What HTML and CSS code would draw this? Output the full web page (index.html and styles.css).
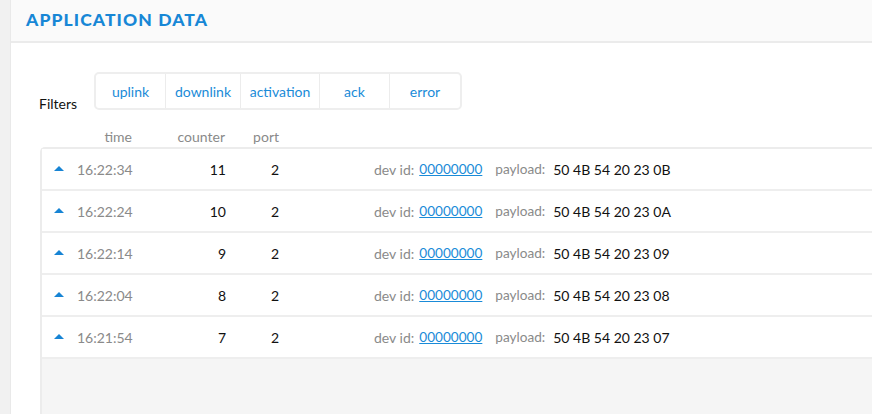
FILE: index.html
```html
<!DOCTYPE html>
<html>
<head>
<meta charset="utf-8">
<link rel="stylesheet" href="styles.css">
</head>
<body>
<div class="panel">
  <div class="header"><h1 class="title">APPLICATION DATA</h1></div>
  <div class="content">
    <div class="filters">
      <span class="filters-label">Filters</span>
      <div class="btn-group">
        <span class="btn b-uplink">uplink</span>
        <span class="btn b-downlink">downlink</span>
        <span class="btn b-activation">activation</span>
        <span class="btn b-ack">ack</span>
        <span class="btn b-error">error</span>
      </div>
    </div>
    <div class="colheads">
      <span class="c-time">time</span>
      <span class="c-counter">counter</span>
      <span class="c-port">port</span>
    </div>
    <div class="table">
      <div class="row"><span class="arrow"></span><span class="c-time">16:22:34</span><span class="c-counter">11</span><span class="c-port">2</span><span class="lbl dev">dev id:</span><a class="link">00000000</a><span class="lbl pay">payload:</span><span class="val">50 4B 54 20 23 0B</span></div>
      <div class="row"><span class="arrow"></span><span class="c-time">16:22:24</span><span class="c-counter">10</span><span class="c-port">2</span><span class="lbl dev">dev id:</span><a class="link">00000000</a><span class="lbl pay">payload:</span><span class="val">50 4B 54 20 23 0A</span></div>
      <div class="row"><span class="arrow"></span><span class="c-time">16:22:14</span><span class="c-counter">9</span><span class="c-port">2</span><span class="lbl dev">dev id:</span><a class="link">00000000</a><span class="lbl pay">payload:</span><span class="val">50 4B 54 20 23 09</span></div>
      <div class="row"><span class="arrow"></span><span class="c-time">16:22:04</span><span class="c-counter">8</span><span class="c-port">2</span><span class="lbl dev">dev id:</span><a class="link">00000000</a><span class="lbl pay">payload:</span><span class="val">50 4B 54 20 23 08</span></div>
      <div class="row"><span class="arrow"></span><span class="c-time">16:21:54</span><span class="c-counter">7</span><span class="c-port">2</span><span class="lbl dev">dev id:</span><a class="link">00000000</a><span class="lbl pay">payload:</span><span class="val">50 4B 54 20 23 07</span></div>
    </div>
  </div>
</div>
</body>
</html>
```
FILE: styles.css
```css
html, body {
  margin: 0;
  padding: 0;
  height: 100%;
  overflow: hidden;
}
body {
  background: #f1f1f1;
  font-family: Lato, "Open Sans", sans-serif;
  font-size: 14px;
  color: #111;
}
.panel {
  margin-left: 10px;
  border-left: 1px solid #e9e9e9;
  background: #fff;
  height: 414px;
  overflow: hidden;
}
.header {
  height: 41px;
  background: #fafafa;
  border-bottom: 2px solid #ebebeb;
  display: flex;
  align-items: center;
  padding-left: 15px;
}
.title {
  margin: 0;
  font-size: 17.5px;
  font-weight: 900;
  letter-spacing: 1.1px;
  color: #1787d6;
  line-height: 1;
  position: relative;
  top: -1px;
}
.content {
  padding-left: 28px;
}
.filters {
  display: flex;
  align-items: flex-end;
  padding-top: 29px;
}
.filters-label {
  width: 55px;
  line-height: 16px;
  margin-bottom: -2px;
  font-size: 14px;
  color: #111;
}
.btn-group {
  display: flex;
  height: 34px;
  border: 2px solid #eeeeee;
  border-radius: 5px;
}
.btn {
  display: flex;
  align-items: center;
  justify-content: center;
  color: #1a8bd8;
  font-size: 14px;
  border-left: 1px solid #ececec;
}
.btn:first-child { border-left: 0; }
.b-uplink { width: 69px; }
.b-downlink { width: 74px; }
.b-activation { width: 78px; }
.b-ack { width: 69px; }
.b-error { width: 70px; }
.colheads {
  display: flex;
  height: 37px;
  align-items: flex-end;
  padding-left: 37px;
  color: #8a8a8a;
  font-size: 14px;
  line-height: 16px;
  box-sizing: border-box;
  padding-bottom: 2px;
}
.colheads .c-time { width: 56px; text-align: right; }
.colheads .c-counter { width: 93px; text-align: right; }
.colheads .c-port { width: 54px; text-align: right; }
.table {
  margin-left: 1px;
  border-left: 2px solid #ececec;
  border-top: 2px solid #ececec;
  border-top-left-radius: 5px;
  background: #f5f5f5;
  height: 300px;
}
.row {
  display: flex;
  align-items: center;
  height: 40px;
  background: #fff;
  border-bottom: 2px solid #eeeeee;
  font-size: 14px;
}
.arrow {
  width: 0;
  height: 0;
  margin-left: 12px;
  margin-right: 13px;
  border-left: 5px solid transparent;
  border-right: 5px solid transparent;
  border-bottom: 5px solid #1784d4;
  position: relative;
  top: -1px;
}
.row .c-time { width: 55px; text-align: right; color: #8a8a8a; }
.row .c-counter { width: 94px; text-align: right; color: #111; }
.row .c-port { width: 53px; text-align: right; color: #111; }
.lbl { color: #8a8a8a; }
.dev { margin-left: 95px; }
.link {
  margin-left: 5px;
  color: #1a8bd8;
  text-decoration: underline;
  font-size: 13.6px;
}
.pay { margin-left: 13px; font-size: 13.6px; }
.val { margin-left: 8px; color: #111; }
```
